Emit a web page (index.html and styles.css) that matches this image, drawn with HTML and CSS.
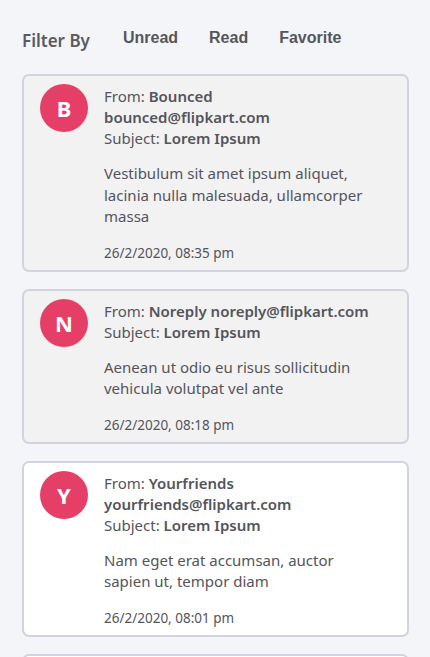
FILE: index.html
```html
<!DOCTYPE html>
<html>
<head>
<meta charset="utf-8">
<link rel="stylesheet" href="styles.css">
</head>
<body>
<div class="page">
  <div class="filter-bar">
    <span class="filter-label">Filter By</span>
    <button class="filter-btn">Unread</button>
    <button class="filter-btn">Read</button>
    <button class="filter-btn">Favorite</button>
  </div>
  <div class="list">
    <div class="card read">
      <div class="avatar">B</div>
      <div class="content">
        <div class="meta">From: <b>Bounced bounced@flipkart.com</b></div>
        <div class="meta">Subject: <b>Lorem Ipsum</b></div>
        <p class="body">Vestibulum sit amet ipsum aliquet, lacinia nulla malesuada, ullamcorper massa</p>
        <div class="date">26/2/2020, 08:35 pm</div>
      </div>
    </div>
    <div class="card read">
      <div class="avatar">N</div>
      <div class="content">
        <div class="meta">From: <b>Noreply noreply@flipkart.com</b></div>
        <div class="meta">Subject: <b>Lorem Ipsum</b></div>
        <p class="body">Aenean ut odio eu risus sollicitudin vehicula volutpat vel ante</p>
        <div class="date">26/2/2020, 08:18 pm</div>
      </div>
    </div>
    <div class="card">
      <div class="avatar">Y</div>
      <div class="content">
        <div class="meta">From: <b>Yourfriends yourfriends@flipkart.com</b></div>
        <div class="meta">Subject: <b>Lorem Ipsum</b></div>
        <p class="body">Nam eget erat accumsan, auctor sapien ut, tempor diam</p>
        <div class="date">26/2/2020, 08:01 pm</div>
      </div>
    </div>
    <div class="card">
      <div class="avatar">E</div>
      <div class="content">
        <div class="meta">From: <b>Enterprise enterprise@flipkart.com</b></div>
        <div class="meta">Subject: <b>Lorem Ipsum</b></div>
        <p class="body">Lorem ipsum dolor sit amet</p>
        <div class="date">26/2/2020, 07:50 pm</div>
      </div>
    </div>
  </div>
</div>
</body>
</html>
```

FILE: styles.css
```css
html, body {
  margin: 0;
  padding: 0;
  background: #f4f5f9;
}
body {
  font-family: "Noto Sans", "Open Sans", sans-serif;
  color: #54545c;
}
.page {
  padding: 24px 21px 0 22px;
}
.filter-bar {
  display: flex;
  align-items: center;
  height: 28px;
  margin-bottom: 22px;
}
.filter-label {
  font-size: 17px;
  font-weight: 600;
  color: #5a5a62;
  margin-right: 33px;
  padding-top: 4px;
}
.filter-btn {
  border: none;
  background: none;
  padding: 0;
  margin-right: 31px;
  font-family: "Liberation Sans", Arial, sans-serif;
  font-weight: bold;
  font-size: 16px;
  color: #55555d;
}
.list {
  display: flex;
  flex-direction: column;
  gap: 17px;
}
.card {
  display: flex;
  gap: 16px;
  background: #ffffff;
  border: 2px solid #d2d3de;
  border-radius: 7px;
  padding: 8px 16px 8px 16px;
}
.card.read {
  background: #f2f2f2;
}
.avatar {
  flex: 0 0 48px;
  width: 48px;
  height: 48px;
  border-radius: 50%;
  background: #e63f67;
  color: #fff;
  font-size: 22px;
  font-weight: 700;
  display: flex;
  align-items: center;
  justify-content: center;
}
.content {
  flex: 1;
  padding-top: 2px;
  padding-right: 20px;
}
.meta {
  font-size: 15px;
  line-height: 21px;
}
.meta b {
  font-weight: 600;
}
.body {
  margin: 14px 0 0 0;
  font-size: 15px;
  line-height: 21.5px;
}
.date {
  margin-top: 16px;
  font-size: 13.5px;
  line-height: 18px;
}
```
